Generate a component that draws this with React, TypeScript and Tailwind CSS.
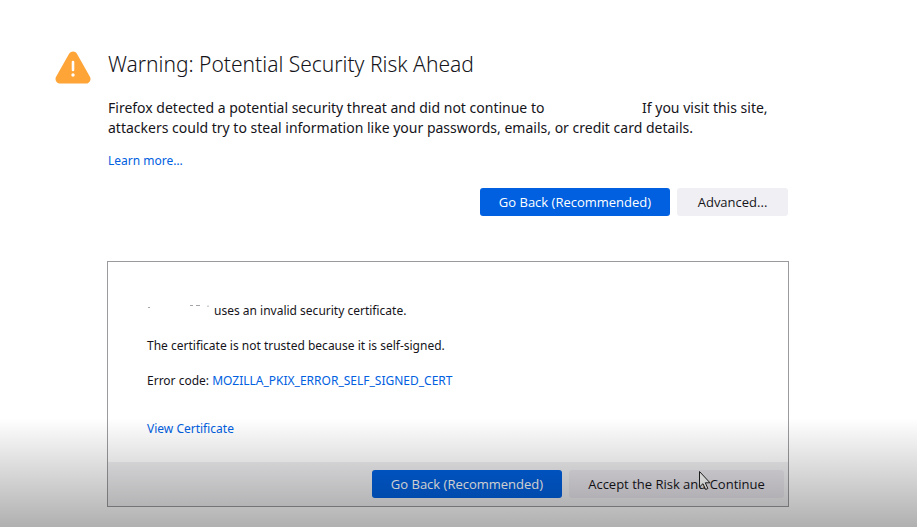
import React from "react";

const blueButton =
  "h-7 w-[190px] rounded-[3px] bg-[#0060df] pt-0.5 font-['Open_Sans',sans-serif] text-[13px] font-medium text-white";
const grayButton =
  "h-7 rounded-[3px] pt-0.5 font-['Open_Sans',sans-serif] text-[13px] font-medium text-[#15141a]";

function WarningIcon() {
  return (
    <svg viewBox="0 0 36 34" className="mt-px h-[34px] w-9 shrink-0" aria-hidden="true">
      <path
        d="M18 5 L31 28 H5 Z"
        fill="#ffa436"
        stroke="#ffa436"
        strokeWidth="9"
        strokeLinejoin="round"
      />
      <path d="M18 11v8" stroke="#fff" strokeWidth="2.6" strokeLinecap="round" />
      <circle cx="18" cy="24" r="1.7" fill="#fff" />
    </svg>
  );
}

function HostRemnant() {
  return (
    <svg viewBox="0 0 64 20" className="h-5 w-16 shrink-0" aria-hidden="true">
      <path d="M1 6.500h2M43 4.500h3M49 4.500h4M61 4.500v1.500" stroke="#a5a4aa" strokeWidth="1" />
    </svg>
  );
}

export default function App() {
  return (
    <main className="relative min-h-screen bg-white pt-[50px] pr-[129px] pl-[55px] font-['Noto_Sans',sans-serif] text-[#15141a]">
      <section className="flex gap-[17px]">
        <WarningIcon />
        <div className="min-w-0 flex-1">
          <h1 className="text-[21px] leading-7 font-light">Warning: Potential Security Risk Ahead</h1>
          <p className="mt-5 text-sm leading-5">
            Firefox detected a potential security threat and did not continue to
            <span className="inline-block w-[94px]" /> <span>If you visit this site,</span> attackers could try to steal information like your passwords, emails, or credit card details.
          </p>
          <a href="#learn" className="mt-[13px] block w-fit text-xs leading-5 text-[#0060df]">Learn more…</a>
          <div className="mt-[17px] flex justify-end gap-[7px]">
            <button className={blueButton}>Go Back (Recommended)</button>
            <button className={`${grayButton} w-[111px] bg-[#f0f0f4]`}>Advanced...</button>
          </div>
          <div className="-mx-px mt-[45px] border border-[#9b9b9f]">
            <div className="px-[39px] pt-[39px] pb-[23px] text-xs leading-5">
              <p className="flex gap-[3px]"><HostRemnant />uses an invalid security certificate.</p>
              <p className="mt-[15px]">The certificate is not trusted because it is self-signed.</p>
              <p className="mt-[15px]">
                Error code: <a href="#code" className="text-[#0060df]">MOZILLA_PKIX_ERROR_SELF_SIGNED_CERT</a>
              </p>
              <a href="#certificate" className="mt-7 block w-fit text-[#0060df]">View Certificate</a>
            </div>
            <div className="flex justify-end gap-[7px] bg-[#f0f0f2] px-1 py-2">
              <button className={blueButton}>Go Back (Recommended)</button>
              <button className={`${grayButton} relative w-[215px] bg-[#e6e4ea]`}>
                Accept the Risk and Continue
                <svg viewBox="0 0 12 20" className="absolute top-px left-[130px] h-5 w-3" aria-hidden="true">
                  <path d="M.5 .5v15.500l3.500-3.300 2.600 5.800 2.300-1-2.600-5.700h4.700z" fill="#fff" stroke="#222" />
                </svg>
              </button>
            </div>
          </div>
        </div>
      </section>
      <div className="pointer-events-none absolute inset-x-0 bottom-0 h-[109px] bg-linear-to-t from-black/31 to-transparent" />
    </main>
  );
}
